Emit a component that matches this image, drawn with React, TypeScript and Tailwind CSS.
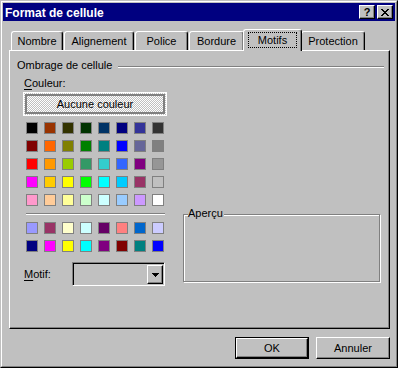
import React from "react";

const topRows: string[][] = [
  ["bg-[#000000]", "bg-[#993300]", "bg-[#333300]", "bg-[#003300]", "bg-[#003366]", "bg-[#000080]", "bg-[#333399]", "bg-[#333333]"],
  ["bg-[#800000]", "bg-[#ff6600]", "bg-[#808000]", "bg-[#008000]", "bg-[#008080]", "bg-[#0000ff]", "bg-[#666699]", "bg-[#808080]"],
  ["bg-[#ff0000]", "bg-[#ff9900]", "bg-[#99cc00]", "bg-[#339966]", "bg-[#33cccc]", "bg-[#3366ff]", "bg-[#800080]", "bg-[#969696]"],
  ["bg-[#ff00ff]", "bg-[#ffcc00]", "bg-[#ffff00]", "bg-[#00ff00]", "bg-[#00ffff]", "bg-[#00ccff]", "bg-[#993366]", "bg-[#c0c0c0]"],
  ["bg-[#ff99cc]", "bg-[#ffcc99]", "bg-[#ffff99]", "bg-[#ccffcc]", "bg-[#ccffff]", "bg-[#99ccff]", "bg-[#cc99ff]", "bg-[#ffffff]"],
];

const bottomRows: string[][] = [
  ["bg-[#9999ff]", "bg-[#993366]", "bg-[#ffffcc]", "bg-[#ccffff]", "bg-[#660066]", "bg-[#ff8080]", "bg-[#0066cc]", "bg-[#ccccff]"],
  ["bg-[#000080]", "bg-[#ff00ff]", "bg-[#ffff00]", "bg-[#00ffff]", "bg-[#800080]", "bg-[#800000]", "bg-[#008080]", "bg-[#0000ff]"],
];

function Swatches({ rows }: { rows: string[][] }) {
  return (
    <div className="grid grid-cols-[repeat(8,12px)] gap-x-[6px] gap-y-[6px] pl-[3px]">
      {rows.flat().map((c, i) => (
        <div key={i} className={`w-[12px] h-[12px] border border-[#808080] ${c}`} />
      ))}
    </div>
  );
}

function Tab({ label, w }: { label: string; w: string }) {
  return (
    <div
      className={`${w} h-[19px] border-t border-l border-r border-t-white border-l-white border-r-black rounded-t-[3px] shadow-[inset_-1px_0_0_#808080] flex items-center justify-center pt-[1px] whitespace-nowrap`}
    >
      {label}
    </div>
  );
}

function CaptionButton({ children }: { children: React.ReactNode }) {
  return (
    <div className="w-[16px] h-[14px] bg-[#c0c0c0] border border-t-white border-l-white border-r-black border-b-black shadow-[inset_-1px_-1px_0_#808080] flex items-center justify-center text-black">
      {children}
    </div>
  );
}

export default function App() {
  return (
    <div
      className="w-[398px] h-[368px] bg-[#c0c0c0] border border-t-[#c0c0c0] border-l-[#c0c0c0] border-r-black border-b-black text-black text-[11px]"
      style={{ fontFamily: '"Liberation Sans", Arial, sans-serif' }}
    >
      <div className="w-full h-full border border-t-white border-l-white border-r-[#808080] border-b-[#808080] p-[1px] flex flex-col">
        {/* Title bar */}
        <div className="h-[18px] bg-[#000080] flex items-center justify-between pl-[2px] pr-[2px] shrink-0">
          <span className="text-white font-bold text-[12px] leading-[18px] pt-[1px]">Format de cellule</span>
          <div className="flex gap-[2px]">
            <CaptionButton>
              <span className="font-bold text-[11px] leading-[11px]">?</span>
            </CaptionButton>
            <CaptionButton>
              <svg width="8" height="7" viewBox="0 0 8 7" shapeRendering="crispEdges">
                <path d="M0 0h2v1h1v1h2V1h1V0h2v1H7v1H6v1H5v1h1v1h1v1h1v1H6V6H5V5H3v1H2v1H0V6h1V5h1V4h1V3H2V2H1V1H0z" fill="#000" />
              </svg>
            </CaptionButton>
          </div>
        </div>

        {/* Tabs */}
        <div className="flex items-end h-[21px] mt-[8px] ml-[6px] pl-[2px] gap-[1px] shrink-0">
          <Tab label="Nombre" w="w-[52px]" />
          <Tab label="Alignement" w="w-[70px]" />
          <Tab label="Police" w="w-[53px]" />
          <Tab label="Bordure" w="w-[55px]" />
          <div className="relative z-10 w-[59px] h-[22px] -mx-[2px] -mb-[1px] bg-[#c0c0c0] border-t border-l border-r border-t-white border-l-white border-r-black rounded-t-[3px] shadow-[inset_-1px_0_0_#808080] flex justify-center pt-[2px]">
            <div className="w-[49px] h-[16px] border border-dotted border-black flex items-center justify-center">
              Motifs
            </div>
          </div>
          <Tab label="Protection" w="w-[64px]" />
        </div>

        {/* Panel */}
        <div className="ml-[6px] w-[381px] h-[279px] shrink-0 border border-t-white border-l-white border-r-black border-b-black shadow-[inset_-1px_-1px_0_#808080]">
          <div className="flex mt-[8px] pl-[7px] pr-[5px] h-[13px]">
            <span className="leading-[13px] whitespace-nowrap">Ombrage de cellule</span>
            <div className="flex-1 ml-[6px] mt-[7px] h-[2px] border-t border-t-[#808080] border-b border-b-white" />
          </div>

          <div className="flex pl-[13px] mt-[5px]">
            {/* Left column */}
            <div className="w-[144px] flex flex-col">
              <div className="h-[13px] leading-[13px] pl-[1px]">
                <span className="underline underline-offset-[2px]">C</span>ouleur:
              </div>
              <div className="mt-[2px] h-[24px] border border-white bg-[image:repeating-conic-gradient(#ffffff_0_25%,#c0c0c0_0_50%)] bg-[length:2px_2px] p-[1px]">
                <div className="w-full h-full border-2 border-[#808080] flex items-center justify-center">
                  Aucune couleur
                </div>
              </div>
              <div className="mt-[6px]">
                <Swatches rows={topRows} />
              </div>
              <div className="mt-[7px] ml-[3px] w-[139px] h-[2px] border-t border-t-[#808080] border-b border-b-white" />
              <div className="mt-[7px]">
                <Swatches rows={bottomRows} />
              </div>
              <div className="mt-[10px] flex items-center">
                <div className="w-[49px] pl-[1px] leading-[13px]">
                  <span className="underline underline-offset-[2px]">M</span>otif:
                </div>
                <div className="w-[93px] h-[24px] border border-t-[#808080] border-l-[#808080] border-r-white border-b-white shadow-[inset_1px_1px_0_#000]">
                  <div className="flex justify-end h-full pt-[2px] pr-[1px] pb-[1px]">
                    <div className="w-[16px] h-[19px] border border-t-white border-l-white border-r-black border-b-black shadow-[inset_-1px_-1px_0_#808080] flex items-center justify-center">
                      <svg width="7" height="4" viewBox="0 0 7 4" shapeRendering="crispEdges">
                        <path d="M0 0h7v1H6v1H5v1H4v1H3V3H2V2H1V1H0z" fill="#000" />
                      </svg>
                    </div>
                  </div>
                </div>
              </div>
            </div>

            {/* Right column */}
            <div className="ml-[16px] mt-[130px] relative">
              <div className="mt-[7px] w-[197px] h-[68px] border border-[#808080] shadow-[inset_1px_1px_0_#ffffff,1px_1px_0_#ffffff]" />
              <span className="absolute top-0 left-[5px] bg-[#c0c0c0] leading-[13px] pr-[1px]">Aperçu</span>
            </div>
          </div>
        </div>

        {/* Buttons */}
        <div className="flex justify-end gap-[7px] pr-[5px] mt-[8px]">
          <div className="w-[74px] h-[22px] border border-black">
            <div className="w-full h-full border border-t-white border-l-white border-r-black border-b-black shadow-[inset_-1px_-1px_0_#808080] flex items-center justify-center">
              OK
            </div>
          </div>
          <div className="w-[74px] h-[22px] border border-t-white border-l-white border-r-black border-b-black shadow-[inset_-1px_-1px_0_#808080] flex items-center justify-center">
            Annuler
          </div>
        </div>
      </div>
    </div>
  );
}
